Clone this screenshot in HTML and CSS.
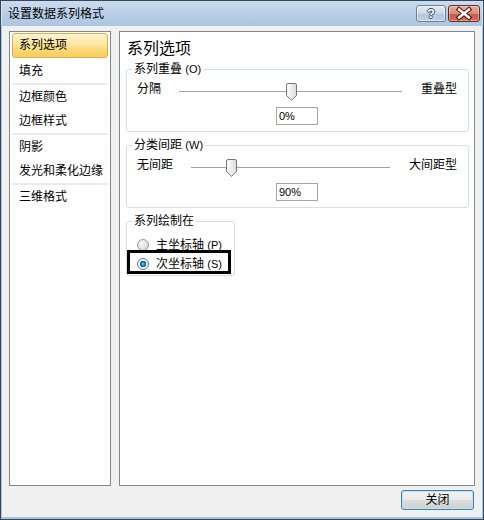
FILE: index.html
```html
<!DOCTYPE html>
<html lang="zh-CN">
<head>
<meta charset="utf-8">
<title>设置数据系列格式</title>
<link rel="stylesheet" href="styles.css">
</head>
<body>
<div class="window">
  <div class="titlebar">
    <span class="title">设置数据系列格式</span>
    <div class="tb-buttons">
      <div class="tb-btn help">?</div>
      <div class="tb-btn close">
        <svg width="32" height="17" viewBox="0 0 32 17">
          <path d="M11 4.5 L21 12.5 M21 4.5 L11 12.5" stroke="#4a1a12" stroke-width="4.6" stroke-linecap="square" fill="none"/>
          <path d="M11 4.5 L21 12.5 M21 4.5 L11 12.5" stroke="#ffffff" stroke-width="2.4" stroke-linecap="square" fill="none"/>
        </svg>
      </div>
    </div>
  </div>
  <div class="client">
    <div class="panes">
      <ul class="nav">
        <li class="item selected">系列选项</li>
        <li class="item">填充</li>
        <li class="sep"></li>
        <li class="item">边框颜色</li>
        <li class="item">边框样式</li>
        <li class="sep"></li>
        <li class="item">阴影</li>
        <li class="item">发光和柔化边缘</li>
        <li class="sep"></li>
        <li class="item">三维格式</li>
      </ul>
      <div class="content">
        <h2 class="heading">系列选项</h2>
        <fieldset class="group">
          <legend>系列重叠 <span class="key">(O)</span></legend>
          <div class="slider-row">
            <span class="lbl">分隔</span>
            <div class="track">
              <div class="thumb" style="left:50%">
                <svg width="11" height="18" viewBox="0 0 11 18">
                  <defs><linearGradient id="tg1" x1="0" y1="0" x2="1" y2="0"><stop offset="0" stop-color="#ffffff"/><stop offset="1" stop-color="#dcdcdc"/></linearGradient></defs>
                  <path d="M0.5 2 Q0.5 0.5 2 0.5 H9 Q10.5 0.5 10.5 2 V12.5 L5.5 17.3 L0.5 12.5 Z" fill="url(#tg1)" stroke="#767676"/>
                </svg>
              </div>
            </div>
            <span class="lbl">重叠型</span>
          </div>
          <div class="value">0%</div>
        </fieldset>
        <fieldset class="group">
          <legend>分类间距 <span class="key">(W)</span></legend>
          <div class="slider-row">
            <span class="lbl">无间距</span>
            <div class="track">
              <div class="thumb" style="left:20%">
                <svg width="11" height="18" viewBox="0 0 11 18">
                  <defs><linearGradient id="tg2" x1="0" y1="0" x2="1" y2="0"><stop offset="0" stop-color="#ffffff"/><stop offset="1" stop-color="#dcdcdc"/></linearGradient></defs>
                  <path d="M0.5 2 Q0.5 0.5 2 0.5 H9 Q10.5 0.5 10.5 2 V12.5 L5.5 17.3 L0.5 12.5 Z" fill="url(#tg2)" stroke="#767676"/>
                </svg>
              </div>
            </div>
            <span class="lbl">大间距型</span>
          </div>
          <div class="value">90%</div>
        </fieldset>
        <fieldset class="group plot">
          <legend>系列绘制在</legend>
          <div class="radio-row">
            <span class="radio"></span>
            <span class="rlabel">主坐标轴 <span class="key">(P)</span></span>
          </div>
          <div class="radio-row marked">
            <span class="radio checked"></span>
            <span class="rlabel">次坐标轴 <span class="key">(S)</span></span>
          </div>
        </fieldset>
      </div>
    </div>
    <div class="footer">
      <button class="btn">关闭</button>
    </div>
  </div>
</div>
</body>
</html>
```
FILE: styles.css
```css
html, body {
  margin: 0;
  padding: 0;
  background: #f0f0f0;
}

body {
  font-family: "Liberation Sans", "Noto Sans CJK SC", sans-serif;
  font-size: 12px;
  color: #000;
}

.window {
  width: 484px;
  height: 520px;
  box-sizing: border-box;
  border: 1px solid #35475b;
  display: flex;
  flex-direction: column;
  background: #f0f0f0;
}

.titlebar {
  height: 25px;
  flex: none;
  display: flex;
  align-items: center;
  padding: 0 3px 0 7px;
  background: linear-gradient(#cbdcef, #b9cfe7 50%, #adc5e1);
  box-shadow: inset 1px 0 0 #d8e5f3, inset -1px 0 0 #d8e5f3;
}

.title {
  line-height: 14px;
  font-size: 12px;
}

.tb-buttons {
  margin-left: auto;
  align-self: flex-start;
  margin-top: 4px;
  display: flex;
  gap: 2px;
}

.tb-btn {
  height: 17px;
  box-sizing: border-box;
  border-radius: 3px;
  display: flex;
  align-items: center;
  justify-content: center;
}

.tb-btn.help {
  width: 30px;
  border: 1px solid #6f7f95;
  background: linear-gradient(#e2ebf5, #cad9ea 50%, #b3c6dd 51%, #bccee3);
  box-shadow: inset 0 0 0 1px rgba(255,255,255,0.5);
  color: #fff;
  font-weight: bold;
  font-size: 13px;
  line-height: 15px;
  text-shadow: 1px 0 0 #3b4b60, -1px 0 0 #3b4b60, 0 1px 0 #3b4b60, 0 -1px 0 #3b4b60;
}

.tb-btn.close {
  width: 32px;
  border: 1px solid #6b2a20;
  background: linear-gradient(#e8ad9f, #d98a78 50%, #c65a42 51%, #d07055);
  box-shadow: inset 0 0 0 1px rgba(255,255,255,0.35);
  overflow: hidden;
}

.tb-btn.close svg {
  display: block;
  margin: -1px;
}

.client {
  flex: 1;
  display: flex;
  flex-direction: column;
  padding: 5px 8px 9px 8px;
  box-shadow: inset 1px 0 0 #a9c4e3, inset -1px 0 0 #a9c4e3, inset 0 -2px 0 #a9c4e3;
}

.panes {
  height: 455px;
  display: flex;
  gap: 8px;
}

.nav {
  width: 102px;
  box-sizing: border-box;
  margin: 0;
  padding: 1px 1px 0 1px;
  list-style: none;
  background: #fff;
  border: 1px solid #828790;
}

.item {
  height: 24px;
  line-height: 22px;
  box-sizing: border-box;
  margin: 0 1px 0 1px;
  padding-left: 6px;
  border: 1px solid transparent;
  border-radius: 3px;
  white-space: nowrap;
}

.item.selected {
  height: 25px;
  line-height: 23px;
  margin-bottom: 1px;
  border-color: #dcae4b;
  background: linear-gradient(#fff3cf, #fde6a0 45%, #fbd877 70%, #f9cd5a);
}

.sep {
  height: 2px;
  margin: 0 1px;
  background: #e9e9f0;
}

.content {
  flex: 1;
  background: #fff;
  border: 1px solid #828790;
  padding: 7px 5px 0 6px;
}

.heading {
  margin: 0 0 0 1px;
  font-size: 16px;
  line-height: 20px;
  font-weight: normal;
}

.group {
  margin: 6px 0 0 0;
  padding: 7px 11px 6px 10px;
  border: 1px solid #d5dfe5;
  border-radius: 3px;
  min-inline-size: 0;
}

.heading + .group {
  margin-top: 3px;
}

.group legend {
  padding: 0 2px;
  margin-left: -5px;
  line-height: 14px;
  font-size: 12px;
}

.key {
  font-size: 11px;
}

.slider-row {
  display: flex;
  height: 18px;
}

.lbl {
  line-height: 13px;
  white-space: nowrap;
}

.track {
  flex: 1;
  position: relative;
  margin: 0 19px 0 18px;
}

.track::before {
  content: "";
  position: absolute;
  left: 0;
  right: 0;
  top: 8px;
  height: 1px;
  background: #a2a2a2;
}

.thumb {
  position: absolute;
  top: 0;
  margin-left: -5px;
  width: 11px;
  height: 18px;
}

.thumb svg {
  display: block;
}

.value {
  width: 42px;
  height: 18px;
  box-sizing: border-box;
  margin: 6px auto 0;
  border: 1px solid #a5a5a5;
  padding-left: 2px;
  font-size: 11px;
  line-height: 16px;
}

.group.plot {
  width: 109px;
  box-sizing: border-box;
  padding: 7px 4px 2px 10px;
}

.radio-row {
  height: 19px;
  display: flex;
  align-items: center;
  gap: 7px;
  white-space: nowrap;
}

.radio-row.marked {
  position: relative;
}

.radio-row.marked::after {
  content: "";
  position: absolute;
  left: -10px;
  top: -4px;
  width: 104px;
  height: 24px;
  box-sizing: border-box;
  border: 3px solid #000;
}

.radio {
  width: 12px;
  height: 12px;
  box-sizing: border-box;
  border-radius: 50%;
  border: 1px solid #9a9a9a;
  background: radial-gradient(circle at 40% 35%, #f8f8f8, #e0e0e0 60%, #cfcfcf);
  flex: none;
}

.radio.checked {
  border-color: #5a7ea0;
  background: radial-gradient(circle at 50% 50%, #7fd0f6 0, #2a8fd0 1.5px, #0f5c9c 3px, #ffffff 3.6px, #e6eef5 6px);
}

.rlabel {
  line-height: 14px;
}

.footer {
  margin-top: 4px;
  display: flex;
  justify-content: flex-end;
  padding-right: 1px;
}

.btn {
  width: 73px;
  height: 20px;
  box-sizing: border-box;
  border: 1px solid #3c7fb1;
  border-radius: 3px;
  background: linear-gradient(#f2f2f2, #ebebeb 50%, #dddddd 51%, #cfcfcf);
  box-shadow: inset 0 0 0 1px #bfe3f7;
  font-family: "Liberation Sans", "Noto Sans CJK SC", sans-serif;
  font-size: 12px;
  line-height: 16px;
  padding: 0;
  color: #000;
}
```
